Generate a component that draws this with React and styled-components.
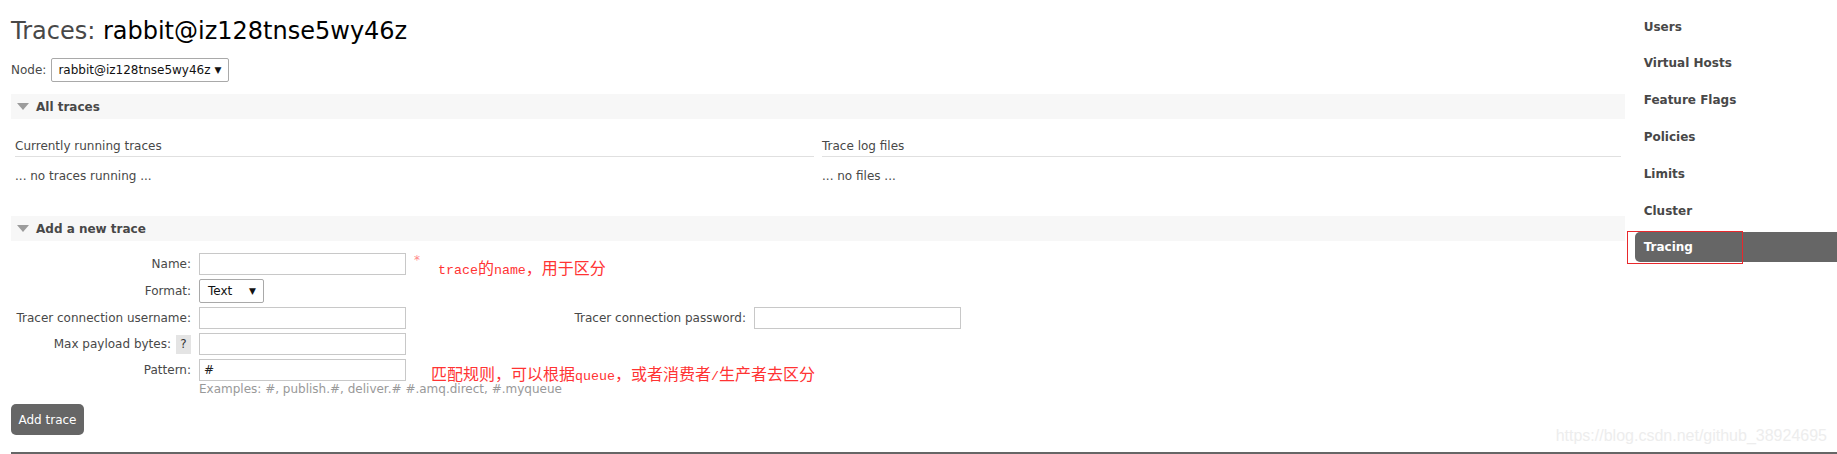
import React from 'react'
import styled, { createGlobalStyle } from 'styled-components'

const GlobalStyle = createGlobalStyle`
  html, body {
    margin: 0;
    padding: 0;
    background: #fff;
  }
  body {
    font-family: Verdana, "DejaVu Sans", sans-serif;
    font-size: 12px;
    color: #484848;
  }
`

const Page = styled.div`
  position: relative;
  width: 1837px;
  height: 454px;
  overflow: hidden;
  display: flex;
  flex-direction: column;
`
const Body = styled.div`
  display: flex;
  align-items: flex-start;
`
const Main = styled.div`
  flex: 1;
  min-width: 0;
  padding: 16px 10px 0 11px;
  display: flex;
  flex-direction: column;
`
const Title = styled.h1`
  margin: 0;
  font-size: 24px;
  font-weight: normal;
  line-height: 30px;
  color: #484848;
  white-space: nowrap;

  b {
    color: #000;
    font-weight: normal;
  }
`
const NodeRow = styled.div`
  margin-top: 12px;
  display: flex;
  align-items: center;
  gap: 5px;
  height: 24px;
`
const SelectBox = styled.div`
  box-sizing: border-box;
  width: ${({ width }) => width}px;
  height: 24px;
  border: 1px solid #a9a9a9;
  border-radius: 2px;
  background: #fff;
  color: #111;
  padding: 0 7px 0 ${({ pad }) => pad || 6}px;
  display: flex;
  align-items: center;
  justify-content: space-between;
  white-space: nowrap;
`
const Arrow = styled.span`
  font-size: 9px;
  color: #111;
`
const SectionHeader = styled.div`
  margin-top: ${({ top }) => top}px;
  height: 25px;
  background: #f7f7f7;
  display: flex;
  align-items: center;
  gap: 7px;
  padding-left: 6px;
  font-weight: bold;
  color: #484848;
`
const Columns = styled.div`
  margin-top: 20px;
  padding: 0 4px;
  display: grid;
  grid-template-columns: 1fr 1fr;
  column-gap: 8px;
`
const ColumnHeading = styled.div`
  line-height: 15px;
  padding-bottom: 2px;
  border-bottom: 1px solid #e0e0e0;
`
const ColumnText = styled.div`
  margin-top: 12px;
  line-height: 15px;
`
const Form = styled.div`
  margin-top: 12px;
  display: grid;
  grid-template-columns: 180px 365px 174px 207px;
  column-gap: 8px;
  row-gap: 4px;
  align-items: start;
`
const Label = styled.div`
  height: ${({ h }) => h || 22}px;
  display: flex;
  align-items: center;
  justify-content: flex-end;
  gap: 5px;
  white-space: nowrap;
  color: #484848;
`
const Cell = styled.div`
  display: flex;
  align-items: flex-start;
  height: ${({ h }) => h || 22}px;
  white-space: nowrap;
`
const Stack = styled.div`
  display: flex;
  flex-direction: column;
`
const Input = styled.div`
  box-sizing: border-box;
  width: 207px;
  height: 22px;
  border: 1px solid #c8c8c8;
  background: #fff;
  color: #222;
  padding-left: 4px;
  display: flex;
  align-items: center;
  flex-shrink: 0;
`
const Mand = styled.span`
  color: #f88;
  margin-left: 8px;
  line-height: 15px;
`
const Help = styled.span`
  width: 15px;
  height: 19px;
  background: #e4e4e4;
  color: #333;
  display: flex;
  align-items: center;
  justify-content: center;
`
const Examples = styled.div`
  line-height: 15px;
  color: #999;
  margin-top: 1px;
`
const Note = styled.span`
  color: #f33;
  font-family: "Noto Sans CJK SC", sans-serif;
  font-size: 16px;
  line-height: 16px;
  margin-left: ${({ left }) => left}px;
  margin-top: ${({ down }) => down}px;
  white-space: nowrap;
`
const NoteLatin = styled.span`
  font-family: "Liberation Mono", monospace;
  font-size: 13.3px;
`
const Button = styled.button`
  margin-top: 7px;
  align-self: flex-start;
  width: 73px;
  height: 31px;
  border: none;
  border-radius: 5px;
  background: #666;
  color: #fff;
  font-family: Verdana, "DejaVu Sans", sans-serif;
  font-size: 12px;
  padding: 0;
`
const Footer = styled.div`
  margin: 17px 0 0 11px;
  border-top: 2px solid #666;
`
const Sidebar = styled.ul`
  width: 202px;
  flex-shrink: 0;
  margin: 0;
  padding: 11.7px 0 0;
  list-style: none;
  display: flex;
  flex-direction: column;
  gap: 6.8px;
`
const NavItem = styled.li`
  position: relative;
  height: 30px;
  padding-left: 8.7px;
  display: flex;
  align-items: center;
  font-weight: bold;
  color: ${({ active }) => (active ? '#fff' : '#484848')};
  background: ${({ active }) => (active ? '#666' : 'transparent')};
  border-radius: 5px 0 0 5px;
`
const Marker = styled.span`
  position: absolute;
  left: -8px;
  top: -1px;
  width: 116px;
  height: 33px;
  box-sizing: border-box;
  border: 1.5px solid #e8282c;
`
const Watermark = styled.div`
  position: absolute;
  right: 10px;
  top: 426px;
  font-family: "Liberation Sans", Arial, sans-serif;
  font-size: 16px;
  line-height: 20px;
  color: #ededed;
`

function Triangle() {
  return (
    <svg width="12" height="7" viewBox="0 0 12 7">
      <polygon points="0,0 12,0 6,7" fill="#9c9c9c" />
    </svg>
  )
}

const navItems = ['Users', 'Virtual Hosts', 'Feature Flags', 'Policies', 'Limits', 'Cluster', 'Tracing']

export default function App() {
  return (
    <>
      <GlobalStyle />
      <Page>
        <Body>
          <Main>
            <Title>
              Traces: <b>rabbit@iz128tnse5wy46z</b>
            </Title>
            <NodeRow>
              Node:
              <SelectBox width={178}>
                rabbit@iz128tnse5wy46z <Arrow>▼</Arrow>
              </SelectBox>
            </NodeRow>

            <SectionHeader top={12}>
              <Triangle />
              All traces
            </SectionHeader>
            <Columns>
              <div>
                <ColumnHeading>Currently running traces</ColumnHeading>
                <ColumnText>... no traces running ...</ColumnText>
              </div>
              <div>
                <ColumnHeading>Trace log files</ColumnHeading>
                <ColumnText>... no files ...</ColumnText>
              </div>
            </Columns>

            <SectionHeader top={32}>
              <Triangle />
              Add a new trace
            </SectionHeader>
            <Form>
              <Label>Name:</Label>
              <Cell style={{ gridColumn: 'span 3' }}>
                <Input />
                <Mand>*</Mand>
                <Note left={18} down={6}>
                  <NoteLatin>trace</NoteLatin>的<NoteLatin>name</NoteLatin>，用于区分
                </Note>
              </Cell>

              <Label h={24}>Format:</Label>
              <Cell h={24} style={{ gridColumn: 'span 3' }}>
                <SelectBox width={65} pad={8}>
                  Text <Arrow>▼</Arrow>
                </SelectBox>
              </Cell>

              <Label>Tracer connection username:</Label>
              <Cell>
                <Input />
              </Cell>
              <Label>Tracer connection password:</Label>
              <Cell>
                <Input />
              </Cell>

              <Label>
                Max payload bytes: <Help>?</Help>
              </Label>
              <Cell style={{ gridColumn: 'span 3' }}>
                <Input />
              </Cell>

              <Label>Pattern:</Label>
              <Stack style={{ gridColumn: 'span 3' }}>
                <Cell>
                  <Input>#</Input>
                  <Note left={25} down={6}>
                    匹配规则，可以根据<NoteLatin>queue</NoteLatin>，或者消费者<NoteLatin>/</NoteLatin>生产者去区分
                  </Note>
                </Cell>
                <Examples>Examples: #, publish.#, deliver.# #.amq.direct, #.myqueue</Examples>
              </Stack>
            </Form>
            <Button>Add trace</Button>
          </Main>

          <Sidebar>
            {navItems.map((item) => (
              <NavItem key={item} active={item === 'Tracing'}>
                {item}
                {item === 'Tracing' && <Marker />}
              </NavItem>
            ))}
          </Sidebar>
        </Body>
        <Footer />
        <Watermark>https://blog.csdn.net/github_38924695</Watermark>
      </Page>
    </>
  )
}
